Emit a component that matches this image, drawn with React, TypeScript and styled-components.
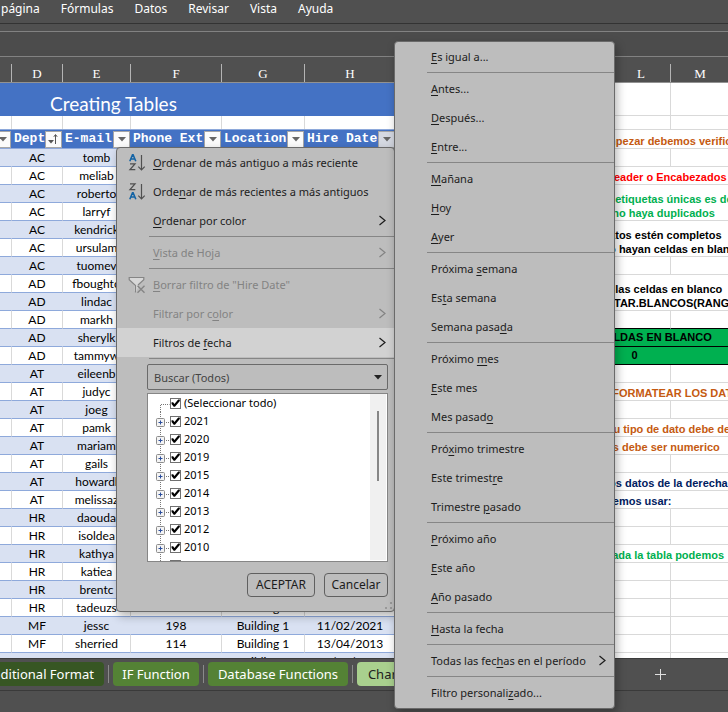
import React from "react";
import styled, { createGlobalStyle } from "styled-components";

const UI = `"Noto Sans", "Open Sans", sans-serif`;
const CELL = `Lato, "Open Sans", sans-serif`;

const Global = createGlobalStyle`
  * { box-sizing: border-box; }
  body { margin: 0; overflow: hidden; }
  button, input { font: inherit; color: inherit; margin: 0; }
`;

/* ---------- window frame ---------- */

const Window = styled.div`
  position: relative;
  display: flex;
  flex-direction: column;
  height: 100vh;
  overflow: hidden;
  background: #505050;
  font-family: ${UI};
`;

const Ribbon = styled.nav`
  display: flex;
  flex: none;
  gap: 21px;
  height: 24px;
  padding-left: 1px;
  border-bottom: 1px solid #333;
`;

const RibbonTab = styled.button`
  height: 18px;
  padding: 0;
  border: 0;
  background: none;
  color: #fff;
  font-size: 12px;
  line-height: 18px;
  white-space: nowrap;
`;

const FormulaBar = styled.div`
  flex: none;
  height: 26px;
  margin-top: 7px;
  border: solid #828282;
  border-width: 1px 0;
  background: #4c4c4c;
`;

const LetterBar = styled.div`
  display: flex;
  flex: none;
  align-items: flex-end;
  height: 26px;
  border-bottom: 1px solid #929292;
`;

const Letter = styled.div<{ $w?: number }>`
  flex: ${(p) => (p.$w ? `0 0 ${p.$w}px` : "0 0 59px")};
  height: 18px;
  border-right: 1px solid #b4b4b4;
  color: #fff;
  font: 13px/20px "Liberation Serif", serif;
  text-align: center;
`;

/* ---------- worksheet ---------- */

const Sheet = styled.main`
  display: flex;
  flex: 1;
  min-height: 0;
  overflow: hidden;
  align-items: flex-start;
  background: #fff;
`;

const Grid = styled.table`
  flex: none;
  border-spacing: 0;
  table-layout: fixed;
  td, th { padding: 0; overflow: hidden; white-space: nowrap; }
`;

const DataGrid = styled(Grid)`
  width: 396px;
  font-family: ${CELL};
`;

const TitleCell = styled.td`
  height: 33px;
  background: #4472c4;
  color: #fff;
  font-size: 19px;
  line-height: 24px;
  && { padding: 8px 0 0 50px; }
`;

const BlankCell = styled.td<{ $h: number }>`
  height: ${(p) => p.$h}px;
  border-right: 1px solid #d9d9d9;
`;

const HeadCell = styled.th`
  height: 20px;
  border: solid #8ea9db;
  border-width: 1px 0;
  background: #4472c4;
  color: #fff;
`;

const HeadInner = styled.div`
  display: flex;
  align-items: center;
  justify-content: space-between;
  height: 18px;
  padding: 0 1px 0 2px;
  font: bold 13px/18px "Liberation Mono", monospace;
`;

const HeadLabel = styled.span`
  flex: 1 1 0;
  min-width: 0;
  overflow: hidden;
  text-align: left;
`;

const FilterButton = styled.button<{ $active?: boolean }>`
  display: flex;
  flex: none;
  align-items: center;
  justify-content: center;
  width: 17px;
  height: 17px;
  padding: 0;
  border: 1px solid #a6a6a6;
  background: ${(p) => (p.$active ? "#d5d9e2" : "#fbfbfb")};
`;

const DataRow = styled.tr<{ $band: boolean }>`
  background: ${(p) => (p.$band ? "#d9e1f2" : "#fff")};
  td {
    height: 18px;
    border-bottom: 1px solid #8ea9db;
    border-right: 1px solid ${(p) => (p.$band ? "#d9e1f2" : "#d9d9d9")};
    color: #000;
    font-size: 12px;
    line-height: 17px;
  }
`;

const Centered = styled.div`
  display: flex;
  justify-content: center;
`;

const EdgeHead = styled.div`
  display: flex;
  justify-content: flex-end;
  padding-right: 1px;
`;

const NoteGrid = styled(Grid)`
  width: 333px;
`;

const NoteCell = styled.td<{ $h: number; $color?: string }>`
  height: ${(p) => p.$h}px;
  border-bottom: 1px solid #d9d9d9;
  color: ${(p) => p.$color};
  font: bold 11px/14px "Liberation Sans", sans-serif;
  vertical-align: bottom;
  && { padding-left: 210px; }
`;

const GreenCell = styled.td`
  height: 18px;
  border-bottom: 1px solid #000;
  background: #00b050;
  font: bold 11px/17px "Liberation Sans", sans-serif;
  && { padding-left: 210px; }
`;

const GreenValue = styled.div`
  width: 57px;
  text-align: center;
`;

const EmptyCell = styled.td<{ $h: number; $dark?: boolean }>`
  height: ${(p) => p.$h}px;
  border-bottom: 1px solid ${(p) => (p.$dark ? "#000" : "#d9d9d9")};
  border-right: 1px solid #d9d9d9;
`;

/* ---------- sheet tabs ---------- */

const Footer = styled.footer`
  flex: none;
  height: 54px;
  border-top: 1px solid #3c3c3c;
`;

const TabStrip = styled.div`
  display: flex;
  align-items: center;
  gap: 4px;
  height: 32px;
  padding-bottom: 1px;
  border-bottom: 1px solid #3a3a3a;
`;

const SheetTab = styled.button<{ $bg: string; $w: number; $dark?: boolean; $cut?: boolean }>`
  display: flex;
  flex: none;
  align-items: center;
  justify-content: ${(p) => (p.$cut ? "flex-end" : "center")};
  width: ${(p) => p.$w}px;
  height: 24px;
  padding: 0 ${(p) => (p.$cut ? 10 : 0)}px;
  border: 0;
  border-radius: ${(p) => (p.$cut ? "0 4px 4px 0" : "4px")};
  background: ${(p) => p.$bg};
  color: ${(p) => (p.$dark ? "#222" : "#fff")};
  font-size: 13px;
  line-height: 18px;
  white-space: nowrap;
`;

const TabDivider = styled.span`
  flex: none;
  width: 1px;
  height: 18px;
  background: #8a8a8a;
`;

const AddTab = styled.button`
  display: flex;
  margin-left: 176px;
  padding: 0;
  border: 0;
  background: none;
`;

/* ---------- menus ---------- */

const Panel = styled.div`
  position: absolute;
  border: 1px solid #6a6a6a;
  border-radius: 4px;
  background: #bdbdbd;
  box-shadow: 2px 4px 10px rgba(0, 0, 0, 0.3);
  color: #1c1c1c;
`;

const FilterPanel = styled(Panel)`
  top: 147px;
  left: 116px;
  width: 279px;
  height: 465px;
`;

const DatePanel = styled(Panel)`
  top: 41px;
  left: 394px;
  width: 221px;
  padding-bottom: 1px;
`;

const MenuItem = styled.button<{ $hot?: boolean }>`
  display: grid;
  grid-template-columns: 36px 1fr 16px;
  align-items: center;
  width: 100%;
  height: 29px;
  padding: 0;
  border: 0;
  background: ${(p) => (p.$hot ? "#d2d2d2" : "none")};
  font-size: 11px;
  line-height: 18px;
  text-align: left;
  white-space: nowrap;
  &:disabled { color: #838383; }
  u { text-underline-offset: 2px; }
`;

const ItemIcon = styled.span`
  display: flex;
  padding-left: 11px;
`;

const Rule = styled.hr`
  height: 1px;
  margin: 1px 0 1px 32px;
  border: 0;
  background: #868686;
`;

const PanelBody = styled.div`
  display: flex;
  flex-direction: column;
  gap: 3px;
  padding: 4px 6px 0 30px;
`;

const SearchBox = styled.div`
  display: flex;
  align-items: center;
  height: 26px;
  padding: 0 5px 0 6px;
  border: 1px solid #6a6a6a;
  border-radius: 2px;
  input {
    flex: 1;
    min-width: 0;
    padding: 0;
    border: 0;
    outline: 0;
    background: none;
    font-size: 11px;
  }
  input::placeholder { color: #444; opacity: 1; }
  button { display: flex; padding: 0; border: 0; background: none; }
`;

const Tree = styled.div`
  display: flex;
  height: 169px;
  border: 1px solid #868686;
  background: #fff;
  overflow: hidden;
`;

const TreeList = styled.ul`
  flex: 1;
  margin: 0;
  padding: 0 0 0 7px;
  list-style: none;
`;

const TreeRow = styled.li`
  display: flex;
  align-items: center;
  height: 18px;
  color: #000;
  font-size: 11px;
  line-height: 18px;
  label { display: flex; align-items: center; gap: 3px; }
`;

const Expander = styled.button`
  display: flex;
  padding: 0;
  border: 0;
  background: none;
`;

const Check = styled.input`
  appearance: none;
  display: flex;
  align-items: center;
  justify-content: center;
  width: 11px;
  height: 11px;
  border: 1px solid #707070;
  background: #fff;
  &:checked::before {
    content: "";
    width: 9px;
    height: 9px;
    background: #000;
    clip-path: polygon(6% 42%, 24% 42%, 38% 62%, 80% 10%, 98% 10%, 98% 28%, 44% 92%, 30% 92%, 6% 60%);
  }
`;

const Track = styled.div`
  width: 16px;
  margin: 0 1px 1px 0;
  padding: 17px 0 0 7px;
  background: #f0f0f0;
`;

const Thumb = styled.div`
  width: 2px;
  height: 70px;
  background: #868686;
`;

const Actions = styled.div`
  display: flex;
  justify-content: flex-end;
  gap: 9px;
  margin-top: 8px;
`;

const PushButton = styled.button<{ $w: number }>`
  width: ${(p) => p.$w}px;
  height: 24px;
  padding: 0;
  border: 1px solid #606060;
  border-radius: 4px;
  background: none;
  font-size: 12px;
  line-height: 20px;
`;

const Grip = styled.svg`
  position: absolute;
  right: 1px;
  bottom: 1px;
`;

/* ---------- icons ---------- */

const Chevron = () => (
  <svg width="8" height="12" viewBox="0 0 8 12" fill="none" stroke="currentColor" strokeWidth="1.2">
    <path d="M1.5 1 7 5.5 1.5 10" />
  </svg>
);

const Caret = ({ color = "#666" }: { color?: string }) => (
  <svg width="8" height="5" viewBox="0 0 8 5" fill={color}>
    <path d="M0 0h8L4 4.5z" />
  </svg>
);

const SortedMark = () => (
  <svg width="13" height="12" viewBox="0 0 13 12" fill="#555">
    <path d="M1 7h6L4 10.5z" />
    <path d="M8.5 11V2M6.8 3.8 8.5 1.5l1.7 2.3" fill="none" stroke="#555" />
  </svg>
);

const SortIcon = ({ reverse = false }: { reverse?: boolean }) => {
  const a = "M1.8 7.2 4.5.8h.6l2.7 6.4M2.8 5h4";
  const z = "M2 .8h5L2 6.7h5.3";
  return (
    <svg width="18" height="18" viewBox="0 0 18 18" fill="none">
      <path d={reverse ? z : a} stroke={reverse ? "#505050" : "#1464a5"} strokeWidth={reverse ? 1.3 : 1.6} />
      <path
        d={reverse ? a : z}
        transform="translate(0 9)"
        stroke={reverse ? "#1464a5" : "#505050"}
        strokeWidth={reverse ? 1.6 : 1.3}
      />
      <path d="M13.5 1v15M10.3 12.7l3.2 3.3 3.2-3.3" stroke="#505050" strokeWidth="1.2" />
    </svg>
  );
};

const FunnelIcon = () => (
  <svg width="18" height="18" viewBox="0 0 18 18" fill="none">
    <path d="M1.5 1.5h14V4L10 9.5V11l-2 5.5-1.5-1.5V9.5L1.5 4z" fill="#d8d8d8" />
    <path d="M7.5 16.5v-7L1.2 3.8V1.5h14.6v2.3L10 9" stroke="#858585" strokeWidth="1.2" />
    <path d="m9.5 9.8 7 7m0-7-7 7" stroke="#858585" strokeWidth="1.4" />
  </svg>
);

const PlusBox = () => (
  <svg width="15" height="18" viewBox="0 0 15 18" fill="none">
    <path d="M5.5 0v18M11 10.5h3" stroke="#777" strokeDasharray="1 1" />
    <rect x="1.5" y="6.5" width="8" height="8" rx="1" fill="#f4f4f4" stroke="#8c8c8c" />
    <path d="M3.5 10.5h4M5.5 8.5v4" stroke="#2a4d9c" />
  </svg>
);

const RootBranch = () => (
  <svg width="15" height="18" viewBox="0 0 15 18" fill="none">
    <path d="M5.5 18v-7.5h9" stroke="#777" strokeDasharray="1 1" />
  </svg>
);

/* ---------- data ---------- */

const people: string[][] = [
  ["AC", "tomb"],
  ["AC", "meliab"],
  ["AC", "roberto"],
  ["AC", "larryf"],
  ["AC", "kendrick"],
  ["AC", "ursulam"],
  ["AC", "tuomev"],
  ["AD", "fboughto"],
  ["AD", "lindac"],
  ["AD", "markh"],
  ["AD", "sherylk"],
  ["AD", "tammyw"],
  ["AT", "eileenb"],
  ["AT", "judyc"],
  ["AT", "joeg"],
  ["AT", "pamk"],
  ["AT", "mariam"],
  ["AT", "gails"],
  ["AT", "howardl"],
  ["AT", "melissaz"],
  ["HR", "daouda"],
  ["HR", "isoldea"],
  ["HR", "kathya"],
  ["HR", "katiea"],
  ["HR", "brentc"],
  ["HR", "tadeuzs", "222", "Building 3", "13/04/2023"],
  ["MF", "jessc", "198", "Building 1", "11/02/2021"],
  ["MF", "sherried", "114", "Building 1", "13/04/2013"],
  ["MF", "susanf", "151", "Building 1", "11/02/2012"],
];

type Note = { h?: number; lines?: string[]; color?: string; green?: string; dark?: boolean };

const ORANGE = "#c55a11";
const GREEN = "#00b050";
const NAVY = "#002060";

const notes: Note[] = [
  { h: 33 },
  { h: 14 },
  { h: 19, lines: ["mpezar debemos verificar"], color: ORANGE },
  {},
  { lines: ["Header o Encabezados"], color: "#ff0000" },
  { h: 36, lines: ["s etiquetas únicas es de", "\u00a0\u00a0no haya duplicados"], color: GREEN },
  { h: 36, lines: ["\u00a0atos estén completos", "\u00a0o hayan celdas en blanco"], color: "#000" },
  {},
  { h: 36, lines: ["e las celdas en blanco", "NTAR.BLANCOS(RANGO)"], color: "#000" },
  { dark: true },
  { green: "ELDAS EN BLANCO" },
  { green: "0" },
  {},
  { lines: ["\u00a0\u00a0FORMATEAR LOS DATOS"], color: ORANGE },
  {},
  { lines: ["Su tipo de dato debe de"], color: ORANGE },
  { lines: ["os debe ser numerico"], color: ORANGE },
  {},
  { lines: ["los datos de la derecha"], color: NAVY },
  { lines: ["demos usar:"], color: NAVY },
  {},
  {},
  { lines: ["eada la tabla podemos"], color: GREEN },
  {}, {}, {}, {}, {}, {},
];

/* An underscore precedes the access key; a null entry is a rule. */
const dateFilters: (string | null)[] = [
  "_Es igual a...", null,
  "_Antes...", "_Después...", "_Entre...", null,
  "_Mañana", "_Hoy", "_Ayer", null,
  "Próxima _semana", "Es_ta semana", "Semana pasa_da", null,
  "Próximo _mes", "_Este mes", "Mes pasad_o", null,
  "Pró_ximo trimestre", "Este trimest_re", "Trimestre _pasado", null,
  "_Próximo año", "_Este año", "_Año pasado", null,
  "_Hasta la fecha", null,
  "Todas las fec_has en el período", null,
  "Filtro personali_zado...",
];

const years = ["2021", "2020", "2019", "2015", "2014", "2013", "2012", "2010", "2009"];

const KeyLabel = ({ text }: { text: string }) => {
  const at = text.indexOf("_");
  if (at < 0) return <span>{text}</span>;
  return (
    <span>
      {text.slice(0, at)}
      <u>{text[at + 1]}</u>
      {text.slice(at + 2)}
    </span>
  );
};

type ItemProps = { text: string; icon?: React.ReactNode; sub?: boolean; disabled?: boolean; hot?: boolean };

const Item = ({ text, icon, sub, disabled, hot }: ItemProps) => (
  <MenuItem type="button" role="menuitem" disabled={disabled} $hot={hot}>
    <ItemIcon>{icon}</ItemIcon>
    <KeyLabel text={text} />
    {sub && <Chevron />}
  </MenuItem>
);

const Header = ({ label, sorted, active }: { label: string; sorted?: boolean; active?: boolean }) => (
  <HeadCell scope="col">
    <HeadInner>
      <HeadLabel>{label}</HeadLabel>
      <FilterButton type="button" aria-label={`Filtro ${label}`} $active={active}>
        {sorted ? <SortedMark /> : <Caret />}
      </FilterButton>
    </HeadInner>
  </HeadCell>
);

const widths = [12, 51, 68, 91, 83, 91];

const People = () => (
  <DataGrid>
    <colgroup>
      {widths.map((w, i) => <col key={i} width={w} />)}
    </colgroup>
    <thead>
      <tr><TitleCell colSpan={6}>Creating Tables</TitleCell></tr>
      <tr>{widths.map((_, i) => <BlankCell key={i} $h={13} />)}</tr>
      <tr>
        <HeadCell>
          <EdgeHead><FilterButton type="button" aria-label="Filtro"><Caret /></FilterButton></EdgeHead>
        </HeadCell>
        <Header label="Dept" sorted />
        <Header label="E-mail" />
        <Header label="Phone Ext" />
        <Header label="Location" />
        <Header label="Hire Date" active />
      </tr>
    </thead>
    <tbody>
      {people.map((row, r) => (
        <DataRow key={r} $band={r % 2 === 0}>
          <td />
          {[0, 1, 2, 3, 4].map((c) => (
            <td key={c}><Centered>{row[c]}</Centered></td>
          ))}
        </DataRow>
      ))}
    </tbody>
  </DataGrid>
);

const Notes = () => (
  <NoteGrid>
    <colgroup>
      <col width={275} />
      <col width={58} />
    </colgroup>
    <tbody>
      {notes.map((n, i) => (
        <tr key={i}>
          {n.lines ? (
            <NoteCell colSpan={2} $h={n.h ?? 18} $color={n.color}>
              {n.lines.map((l) => <div key={l}>{l}</div>)}
            </NoteCell>
          ) : n.green ? (
            <GreenCell colSpan={2}>
              {n.green.length > 1 ? n.green : <GreenValue>{n.green}</GreenValue>}
            </GreenCell>
          ) : (
            <>
              <EmptyCell $h={n.h ?? 18} $dark={n.dark} />
              <EmptyCell $h={n.h ?? 18} $dark={n.dark} />
            </>
          )}
        </tr>
      ))}
    </tbody>
  </NoteGrid>
);

export default function App() {
  return (
    <Window>
      <Global />
      <Ribbon>
        {["página", "Fórmulas", "Datos", "Revisar", "Vista", "Ayuda"].map((t) => (
          <RibbonTab key={t} type="button">{t}</RibbonTab>
        ))}
      </Ribbon>
      <FormulaBar />
      <LetterBar>
        {["", "D", "E", "F", "G", "H"].map((l, i) => <Letter key={i} $w={widths[i]}>{l}</Letter>)}
        {["I", "J", "K"].map((l) => <Letter key={l} $w={72}>{l}</Letter>)}
        <Letter>L</Letter>
        <Letter>M</Letter>
      </LetterBar>
      <Sheet>
        <People />
        <Notes />
      </Sheet>
      <Footer>
        <TabStrip>
          <SheetTab type="button" $bg="#375623" $w={104} $cut>Conditional Format</SheetTab>
          <TabDivider />
          <SheetTab type="button" $bg="#548235" $w={86}>IF Function</SheetTab>
          <TabDivider />
          <SheetTab type="button" $bg="#548235" $w={140}>Database Functions</SheetTab>
          <TabDivider />
          <SheetTab type="button" $bg="#a9d08e" $w={118} $dark>Chart Functions</SheetTab>
          <AddTab type="button" aria-label="Nueva hoja">
            <svg width="11" height="11" viewBox="0 0 11 11" stroke="#e0e0e0"><path d="M5.5 0v11M0 5.5h11" /></svg>
          </AddTab>
        </TabStrip>
      </Footer>

      <FilterPanel role="menu">
        <Item text="_Ordenar de más antiguo a más reciente" icon={<SortIcon />} />
        <Item text="Orde_nar de más recientes a más antiguos" icon={<SortIcon reverse />} />
        <Item text="_Ordenar por color" sub />
        <Rule />
        <Item text="_Vista de Hoja" sub disabled />
        <Rule />
        <Item text={'_Borrar filtro de "Hire Date"'} icon={<FunnelIcon />} disabled />
        <Item text="Filtrar por c_olor" sub disabled />
        <Item text="Filtros de _fecha" sub hot />
        <Rule />
        <PanelBody>
          <SearchBox>
            <input type="text" placeholder="Buscar (Todos)" aria-label="Buscar" />
            <button type="button" aria-label="Opciones de búsqueda"><Caret color="#222" /></button>
          </SearchBox>
          <Tree>
            <TreeList>
              <TreeRow>
                <RootBranch />
                <label><Check type="checkbox" defaultChecked />(Seleccionar todo)</label>
              </TreeRow>
              {years.map((y) => (
                <TreeRow key={y}>
                  <Expander type="button" aria-label={`Expandir ${y}`}><PlusBox /></Expander>
                  <label><Check type="checkbox" defaultChecked />{y}</label>
                </TreeRow>
              ))}
            </TreeList>
            <Track><Thumb /></Track>
          </Tree>
          <Actions>
            <PushButton type="button" $w={68}>ACEPTAR</PushButton>
            <PushButton type="button" $w={64}>Cancelar</PushButton>
          </Actions>
        </PanelBody>
        <Grip width="8" height="8" viewBox="0 0 8 8" fill="#999">
          <path d="M5 0h2v2H5zM5 5h2v2H5zM0 5h2v2H0z" />
        </Grip>
      </FilterPanel>

      <DatePanel role="menu">
        {dateFilters.map((t, i) =>
          t === null ? <Rule key={i} /> : <Item key={i} text={t} sub={t.startsWith("Todas")} />
        )}
      </DatePanel>
    </Window>
  );
}
